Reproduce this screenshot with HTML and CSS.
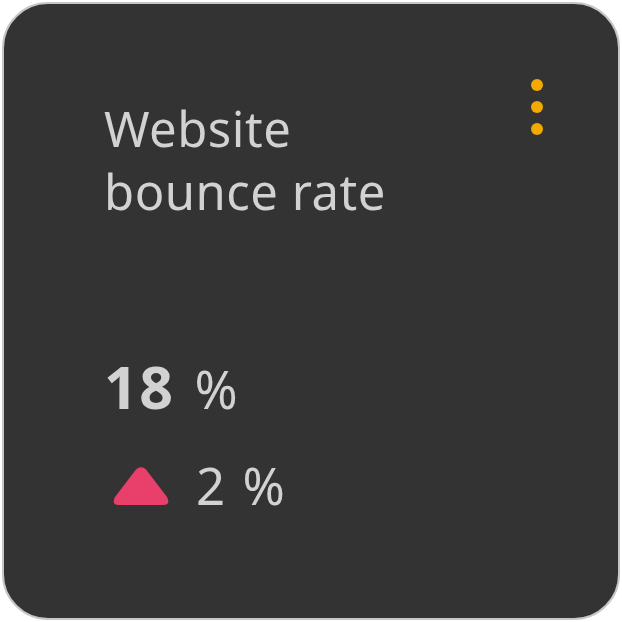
FILE: index.html
```html
<!DOCTYPE html>
<html>
<head>
<meta charset="utf-8">
<link rel="stylesheet" href="styles.css">
</head>
<body>
<div class="card">
  <div class="head">
    <h1 class="title">Website<br>bounce rate</h1>
    <div class="menu" aria-label="menu">
      <span class="dot"></span><span class="dot"></span><span class="dot"></span>
    </div>
  </div>
  <div class="value"><span class="num">18</span><span class="unit">%</span></div>
  <div class="change">
    <svg class="tri" width="60" height="40" viewBox="0 0 60 40"><path d="M25 2.5 Q30 -2 35 2.5 L56 30 Q60 38 52 38 L8 38 Q0 38 4 30 Z" fill="#e8406a"/></svg>
    <span class="delta">2 %</span>
  </div>
</div>
</body>
</html>
```
FILE: styles.css
```css
html, body { margin: 0; padding: 0; background: #ffffff; }
body { width: 622px; height: 622px; }
.card {
  box-sizing: border-box;
  margin: 2px;
  width: 618px;
  height: 618px;
  background: #333333;
  border: 2px solid #c6c6c6;
  border-radius: 46px;
  padding: 74px 0 0 100px;
  font-family: "Noto Sans", sans-serif;
  color: #d2d2d2;
  display: flex;
  flex-direction: column;
}
.head { display: flex; justify-content: space-between; align-items: flex-start; }
.title {
  margin: 0;
  font-weight: 400;
  font-size: 49px;
  line-height: 63px;
  letter-spacing: 0.5px;
  padding-top: 19px;
}
.menu {
  display: flex;
  flex-direction: column;
  gap: 10px;
  margin-right: 75px;
  padding-top: 1px;
}
.dot { width: 12px; height: 12px; border-radius: 50%; background: #f2a900; display: block; }
.value { margin-top: 133px; line-height: 60px; }
.num { font-size: 59px; font-weight: 700; letter-spacing: 1.5px; }
.unit { font-size: 52px; margin-left: 20px; }
.change { display: flex; align-items: center; gap: 25px; margin-top: 27px; margin-left: 7px; }
.tri { display: block; margin-top: 4px; }
.delta { font-size: 51px; line-height: 50px; letter-spacing: 2px; }
```
